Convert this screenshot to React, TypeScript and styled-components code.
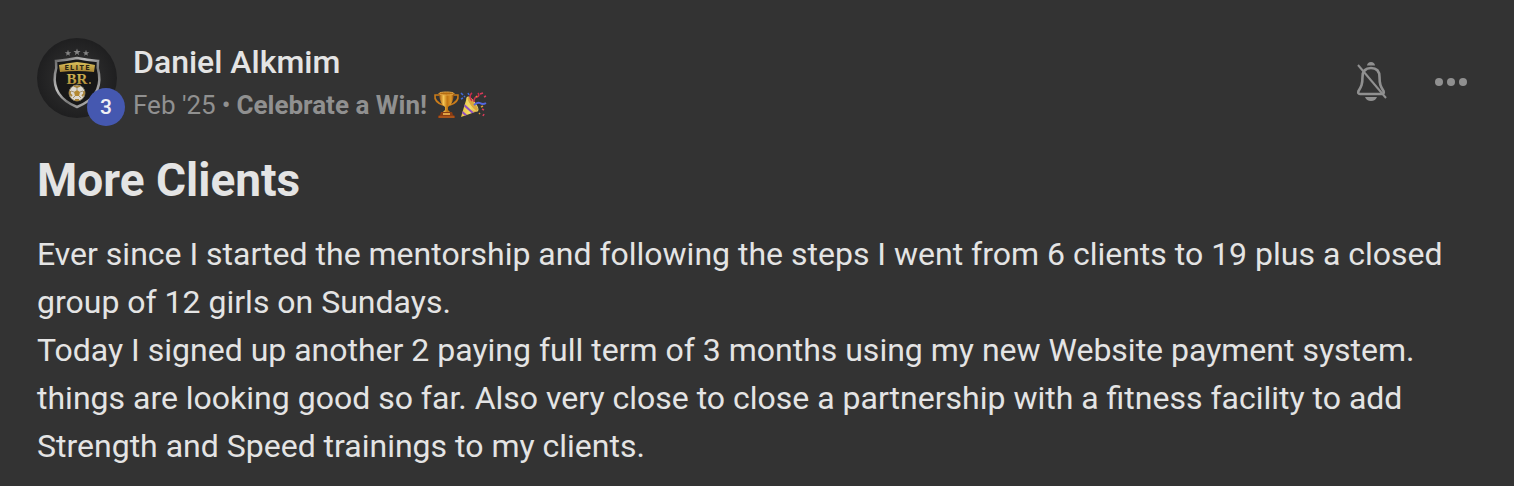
import React from 'react';
import styled, { createGlobalStyle } from 'styled-components';

const GlobalStyle = createGlobalStyle`
  *, *::before, *::after { box-sizing: border-box; }
  body {
    margin: 0;
    background: #333333;
    color: #e4e4e4;
    font-family: Roboto, "Liberation Sans", sans-serif;
  }
`;

const Post = styled.article`
  padding: 38px 39px 16px 37px;
`;

const Header = styled.header`
  display: flex;
  align-items: center;
  gap: 16px;
  height: 80px;
`;

const AvatarLink = styled.a`
  position: relative;
  flex: none;
  width: 80px;
  height: 80px;
  color: inherit;
  text-decoration: none;
`;

const LevelBadge = styled.span`
  position: absolute;
  right: -8px;
  bottom: -8px;
  display: flex;
  align-items: center;
  justify-content: center;
  width: 38px;
  height: 38px;
  border-radius: 50%;
  background: #4558b0;
  color: #f0f0f4;
  font-size: 21px;
  font-weight: 500;
`;

const Byline = styled.div`
  flex: 1;
  min-width: 0;
  padding-top: 10px;
`;

const Author = styled.a`
  display: block;
  color: #e4e4e4;
  font-size: 32px;
  font-weight: 500;
  line-height: 44px;
  text-decoration: none;
`;

const Meta = styled.div`
  display: flex;
  align-items: center;
  gap: 6px;
  color: #909090;
  font-size: 26px;
  line-height: 42px;
`;

const Category = styled.a`
  display: flex;
  align-items: center;
  gap: 6px;
  color: inherit;
  font-weight: 700;
  text-decoration: none;
`;

const EmojiPair = styled.span`
  display: flex;
`;

const Actions = styled.div`
  display: flex;
  align-items: center;
  gap: 32px;
  padding-top: 8px;
`;

const IconButton = styled.button`
  display: flex;
  align-items: center;
  justify-content: center;
  width: 48px;
  height: 48px;
  padding: 0;
  border: 0;
  background: none;
  color: #909090;
  cursor: pointer;
`;

const Title = styled.h1`
  margin: 32px 0 20px;
  font-size: 46px;
  font-weight: 700;
  line-height: 60px;
`;

const Body = styled.p`
  margin: 0;
  font-size: 32px;
  line-height: 48px;
`;

const star = 'M0-4 1-1 4-1 1.600.800 2.400 3.500 0 1.800-2.400 3.500-1.600.800-4-1-1-1Z';

const TeamCrest = () => (
  <svg width="80" height="80" viewBox="0 0 80 80" aria-hidden="true">
    <defs>
      <radialGradient id="leather"><stop stopColor="#353535" /><stop offset="1" stopColor="#1f1f20" /></radialGradient>
      <linearGradient id="steel" x2="1" y2="1">
        <stop stopColor="#666" /><stop offset=".35" stopColor="#bcbcbc" /><stop offset=".6" stopColor="#7a7a7a" /><stop offset="1" stopColor="#ccc" />
      </linearGradient>
      <linearGradient id="brass" x2="0" y2="1"><stop stopColor="#dcc15c" /><stop offset="1" stopColor="#a88432" /></linearGradient>
    </defs>
    <circle cx="40" cy="40" r="40" fill="url(#leather)" />
    <g fill="#858585">
      <path d={star} transform="translate(31 15) scale(.8)" />
      <path d={star} transform="translate(40 14) scale(.9)" />
      <path d={star} transform="translate(49 15) scale(.8)" />
    </g>
    <path d="M19 23Q30 22 40 20Q50 22 61 23Q60 30 62 36Q65 59 40 69Q15 59 18 36Q20 30 19 23Z" fill="#171717" stroke="url(#steel)" strokeWidth="2.500" />
    <path d="M22 27Q31 25 40 24Q49 25 58 27L57 34Q40 32 23 34Z" fill="url(#brass)" />
    <text x="40" y="32" textAnchor="middle" fontFamily="Roboto, sans-serif" fontSize="7" fontWeight="900" textRendering="geometricPrecision" fill="#292313">E L I T E</text>
    <text x="40" y="46" textAnchor="middle" fontFamily="Liberation Serif, serif" fontSize="15" fontWeight="700" fill="url(#brass)">BR</text>
    <circle cx="53" cy="45" r="1" fill="#a38b44" />
    <circle cx="40" cy="55" r="8" fill="#ddd9d1" stroke="#81775f" />
    <path d="m40 52 3 2-1 4h-4l-1-4Z" fill="#b48a34" />
    <path d="m37 48 3 1 3-1M33 53v3l2 2M47 53v3l-2 2M38 62h4" fill="none" stroke="#a9853a" strokeWidth="1.800" />
    <path d="M40 49v3m3 2 3-1m-4 5 2 2m-6-2-2 2m1-6-3-1" fill="none" stroke="#857650" strokeWidth=".7" />
  </svg>
);

const Trophy = () => (
  <svg width="27" height="28" viewBox="0 0 27 28" role="img" aria-label="Trophy">
    <defs>
      <linearGradient id="cup"><stop stopColor="#9c5008" /><stop offset=".3" stopColor="#f5c452" /><stop offset=".55" stopColor="#c07512" /><stop offset=".8" stopColor="#dd9a2b" /><stop offset="1" stopColor="#8a4206" /></linearGradient>
    </defs>
    <path d="M7 4H2Q1 11 10 14M20 4h5q1 7-8 10" fill="none" stroke="#c97b1a" strokeWidth="1.600" />
    <path d="M6 2h15q-.500 11-6 14v3l2 2h-7l2-2v-3Q6.500 13 6 2Z" fill="url(#cup)" />
    <ellipse cx="13.500" cy="2.500" rx="7.500" ry="1.500" fill="#b56c10" stroke="#e0a443" />
    <path d="M8 21h11l1 3 2 1v2H5v-2l2-1Z" fill="#893c13" />
    <path d="M6 26h15" stroke="#c46a24" />
    <path d="M10 22h7v2h-7Z" fill="#e0a445" />
  </svg>
);

const PartyPopper = () => (
  <svg width="27" height="28" viewBox="0 0 27 28" role="img" aria-label="Party popper">
    <defs>
      <linearGradient id="cone"><stop stopColor="#e8c040" /><stop offset=".55" stopColor="#f3df69" /><stop offset="1" stopColor="#cf8b28" /></linearGradient>
      <clipPath id="coneClip"><path d="m7 6Q14 9 18 20L1 26Z" /></clipPath>
    </defs>
    <path d="m7 6Q14 9 18 20L1 26Z" fill="url(#cone)" />
    <g clipPath="url(#coneClip)" stroke="#8f4fc0" strokeWidth="2"><path d="m0 19 8 7M3 13l11 10" /></g>
    <ellipse cx="12.500" cy="13" rx="2.500" ry="8.500" transform="rotate(-36 12.500 13)" fill="#dba63a" stroke="#eed568" />
    <path d="M12 10Q8 5 12 2M14 11q0-5 3-5 3-1 1-4" fill="none" stroke="#c72d4d" strokeWidth="1.600" />
    <path d="M14 14q3-3 6-2 3 2 6 0" fill="none" stroke="#5366de" strokeWidth="1.800" />
    <path d="m1 2 2 2M4 6l1-1M1 8l2-1M8 2l1 2" stroke="#4169d8" strokeWidth="1.600" />
    <path d="m20 3 3-1M24 6l2-1M22 18l2 1M24 23l-1 2" stroke="#d63b59" strokeWidth="1.600" />
    <path d="m16 5 1 1M21 16l2-1M20 22l-1 1" stroke="#d79b33" strokeWidth="1.500" />
  </svg>
);

const BellOff = () => (
  <svg width="32" height="40" viewBox="0 0 32 40" fill="none" aria-hidden="true">
    <path d="M12 3.500Q12.500 0 16 0t4 3.500Z" fill="currentColor" />
    <path d="M16 6C10 6 7.500 10 7.500 15C7.500 23 6 25 3.500 29Q2.500 32 5 32H27Q29.500 32 28.500 29C26 25 24.500 23 24.500 15C24.500 10 22 6 16 6Z" stroke="currentColor" strokeWidth="2.600" />
    <path d="M10 35H22Q20.500 39 16 39T10 35Z" fill="currentColor" />
    <path d="m3 3 28 33" stroke="currentColor" strokeWidth="2" />
  </svg>
);

const MoreDots = () => (
  <svg width="32" height="8" viewBox="0 0 32 8" fill="currentColor" aria-hidden="true">
    <circle cx="4" cy="4" r="4" /><circle cx="16" cy="4" r="4" /><circle cx="28" cy="4" r="4" />
  </svg>
);

export default function App() {
  return (
    <>
      <GlobalStyle />
      <Post>
        <Header>
          <AvatarLink href="#profile" aria-label="Daniel Alkmim, level 3">
            <TeamCrest />
            <LevelBadge>3</LevelBadge>
          </AvatarLink>
          <Byline>
            <Author href="#profile">Daniel Alkmim</Author>
            <Meta>
              <span>Feb '25</span>
              <span>•</span>
              <Category href="#wins">
                Celebrate a Win!
                <EmojiPair><Trophy /><PartyPopper /></EmojiPair>
              </Category>
            </Meta>
          </Byline>
          <Actions>
            <IconButton type="button" aria-label="Turn on notifications"><BellOff /></IconButton>
            <IconButton type="button" aria-label="More options"><MoreDots /></IconButton>
          </Actions>
        </Header>
        <Title>More Clients</Title>
        <Body>
          Ever since I started the mentorship and following the steps I went from 6 clients to 19 plus a closed group of 12 girls on Sundays.
        </Body>
        <Body>Today I signed up another 2 paying full term of 3 months using my new Website payment system.</Body>
        <Body>
          things are looking good so far. Also very close to close a partnership with a fitness facility to add Strength and Speed trainings to my clients.
        </Body>
      </Post>
    </>
  );
}
